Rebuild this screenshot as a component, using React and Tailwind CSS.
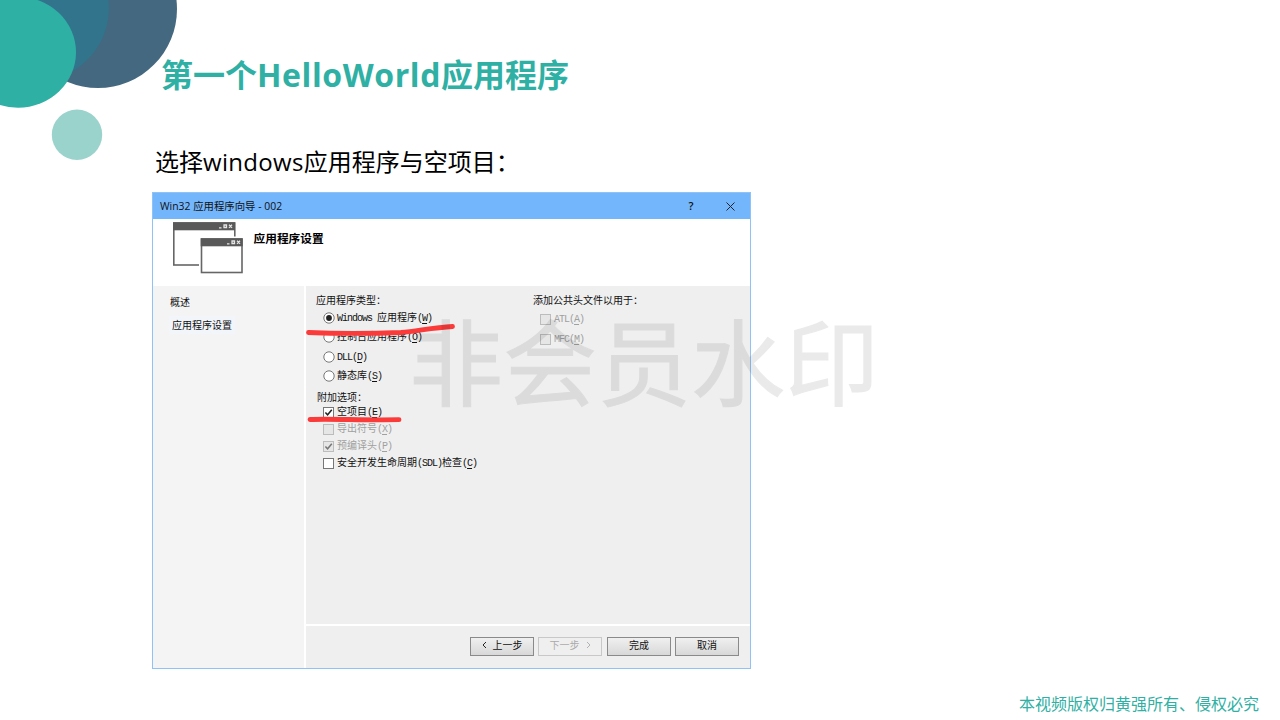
import React from 'react';

const Mono = ({ children }) => (
  <span className="font-['Liberation_Mono','Noto_Sans_CJK_SC',monospace] tracking-[-1px]">{children}</span>
);

const Key = ({ k }) => (
  <Mono>
    (<span className="underline underline-offset-2">{k}</span>)
  </Mono>
);

const Radio = ({ checked }) => (
  <svg className="size-[12px] shrink-0" viewBox="0 0 12 12">
    <circle cx="6" cy="6" r="5.2" fill="#fff" stroke="#777" strokeWidth="1" />
    {checked && <circle cx="6" cy="6" r="2.9" fill="#222" />}
  </svg>
);

const Check = ({ checked, disabled }) => (
  <svg className="size-[11px] shrink-0" viewBox="0 0 11 11">
    <rect x="0.5" y="0.5" width="10" height="10" fill={disabled ? '#e6e6e6' : '#fff'} stroke={disabled ? '#bcbcbc' : '#777'} />
    {checked && <path d="M2.4 5.4 4.6 7.8 8.8 2.8" fill="none" stroke={disabled ? '#777' : '#222'} strokeWidth="1.5" />}
  </svg>
);

const Option = ({ className, control, disabled, children }) => (
  <div className={`flex items-center whitespace-nowrap ${disabled ? 'text-[#a0a0a0]' : 'text-[#111]'} ${className}`}>
    <span className="flex w-[14px] shrink-0">{control}</span>
    <span>{children}</span>
  </div>
);

const Button = ({ className, disabled, children }) => (
  <button
    className={`flex h-[19px] w-[64px] items-center justify-center border pb-[3px] leading-none ${
      disabled
        ? 'border-[#c8c8c8] bg-[#efefef] text-[#aaa]'
        : 'border-[#8a8a8a] bg-linear-to-b from-[#f0f0f0] to-[#d8d8d8] text-[#111]'
    } ${className || ''}`}
  >
    {children}
  </button>
);

const Chevron = ({ right }) => (
  <svg className="h-[8px] w-[5px]" viewBox="0 0 5 8">
    <path d={right ? 'M1 1 4 4 1 7' : 'M4 1 1 4 4 7'} fill="none" stroke="currentColor" strokeWidth="0.9" />
  </svg>
);

const WindowsIcon = () => (
  <svg className="h-[52px] w-[71px]" viewBox="0 0 71 52">
    <rect x="0.8" y="1" width="61" height="42" fill="#fff" stroke="#666" strokeWidth="1.6" />
    <rect x="0" y="0.3" width="62" height="8" fill="#595959" />
    <path d="M46 5.8h2.500M51 3h2.500v2.500h-2.500zM56 2.800l3 3m0-3-3 3" fill="none" stroke="#e5e5e5" strokeWidth="1.3" />
    <rect x="26" y="14.500" width="45" height="38" fill="#fff" />
    <rect x="28.500" y="17" width="40.500" height="33.500" fill="#fff" stroke="#666" strokeWidth="1.6" />
    <rect x="27.700" y="16.300" width="42" height="8" fill="#595959" />
    <path d="M54 21.800h2.500M59 19h2.500v2.500h-2.500zM64 18.800l3 3m0-3-3 3" fill="none" stroke="#e5e5e5" strokeWidth="1.3" />
  </svg>
);

const Circles = () => (
  <svg className="absolute top-0 left-0 h-[180px] w-[200px]" viewBox="0 0 200 180">
    <clipPath id="overlap">
      <circle cx="98" cy="9" r="79" />
    </clipPath>
    <circle cx="98" cy="9" r="79" fill="#44687f" />
    <circle cx="36" cy="8" r="73" fill="#31748c" clipPath="url(#overlap)" />
    <ellipse cx="18" cy="52.3" rx="58" ry="55.5" fill="#2fb0a4" />
    <circle cx="77" cy="134.7" r="25.2" fill="#9ad3cc" />
  </svg>
);

const Dialog = () => (
  <section className="relative ml-[152px] flex h-[477px] w-[599px] flex-col border border-[#8fc3f5] bg-[#efefef] text-[10px] leading-[12px] text-[#111]">
    <header className="flex h-[26px] shrink-0 items-center bg-[#74b6fc] pl-[7px]">
      <span className="flex-1 font-['Open_Sans','Noto_Sans_CJK_SC',sans-serif] text-[10.4px]">Win32 应用程序向导 - 002</span>
      <span className="w-[9px] text-center font-['Open_Sans',sans-serif] text-[11px] font-semibold">?</span>
      <svg className="mr-[15.5px] ml-[30px] size-[9px]" viewBox="0 0 9 9">
        <path d="M.5.5l8 8m0-8-8 8" stroke="#223" strokeWidth="1" />
      </svg>
    </header>
    <div className="flex h-[67px] shrink-0 bg-white pt-[3px] pl-[20px]">
      <WindowsIcon />
      <h2 className="ml-[9.5px] pt-[7px] text-[11.7px] leading-[18px] font-bold text-black">应用程序设置</h2>
    </div>
    <div className="flex min-h-0 flex-1">
      <nav className="w-[151px] shrink-0 bg-[#f4f4f4] pt-[10px] pl-[17px]">
        <div>概述</div>
        <div className="mt-[8px] -ml-[1px] w-[66px] bg-[#f2f6fb] py-[3px] pl-[3px]">应用程序设置</div>
      </nav>
      <div className="flex flex-1 flex-col border-l-2 border-white">
        <div className="flex flex-1 pt-[8px]">
          <div className="w-[217px] pl-[10px]">
            <div>应用程序类型：</div>
            <div className="flex flex-col pl-[7px]">
              <Option className="mt-[2.5px] h-[19.3px]" control={<Radio checked />}><Mono>Windows </Mono>应用程序<Key k="W" /></Option>
              <Option className="h-[19.3px]" control={<Radio />}>控制台应用程序<Key k="O" /></Option>
              <Option className="h-[19.3px]" control={<Radio />}><Mono>DLL</Mono><Key k="D" /></Option>
              <Option className="h-[19.3px]" control={<Radio />}>静态库<Key k="S" /></Option>
            </div>
            <div className="mt-[5px] pl-px">附加选项：</div>
            <div className="flex flex-col pl-[7px]">
              <Option className="mt-[1px] h-[17px]" control={<Check checked />}>空项目<Key k="E" /></Option>
              <Option className="h-[17px]" disabled control={<Check disabled />}>导出符号<Key k="X" /></Option>
              <Option className="h-[17px]" disabled control={<Check disabled checked />}>预编译头<Key k="P" /></Option>
              <Option className="h-[17px]" control={<Check />}>安全开发生命周期<Mono>(SDL)</Mono>检查<Key k="C" /></Option>
            </div>
          </div>
          <div className="pl-[10px]">
            <div>添加公共头文件以用于：</div>
            <div className="pl-[7px]">
              <Option className="mt-[3px] h-[20px]" disabled control={<Check disabled />}><Mono>ATL</Mono><Key k="A" /></Option>
              <Option className="h-[20px]" disabled control={<Check disabled />}><Mono>MFC</Mono><Key k="M" /></Option>
            </div>
          </div>
        </div>
        <footer className="flex h-[44px] justify-end border-t-2 border-white pt-[11px] pr-[11px]">
          <Button className="gap-[6px]"><Chevron />上一步</Button>
          <Button disabled className="ml-[4px] gap-[6px]">下一步<Chevron right /></Button>
          <Button className="ml-[5px]">完成</Button>
          <Button className="ml-[4px]">取消</Button>
        </footer>
      </div>
    </div>
    <svg className="absolute top-[127px] left-[150px] h-[110px] w-[160px]" viewBox="0 0 160 110">
      <path d="M5.500 12.500C30 13.500 70 13.500 98 12.500C115 11 130 7.500 149.500 6.500" fill="none" stroke="#fb3a3a" strokeWidth="4.800" strokeLinecap="round" />
      <path d="M7 99.500C30 98.500 60 100.500 96 99.700" fill="none" stroke="#fb3a3a" strokeWidth="4.800" strokeLinecap="round" />
    </svg>
  </section>
);

export default function App() {
  return (
    <main className="relative h-[720px] w-[1280px] overflow-hidden bg-white font-['Noto_Sans_CJK_SC',sans-serif]">
      <Circles />
      <div className="relative flex h-full flex-col">
        <h1 className="mt-[51px] ml-[161px] h-[48px] font-['Open_Sans','Noto_Sans_CJK_SC',sans-serif] text-[32px] leading-[48px] font-bold whitespace-nowrap text-[#2fb0a4]">
          第一个<span className="tracking-[0.6px]">HelloWorld</span>应用程序
        </h1>
        <p className="mt-[45px] ml-[155px] h-[48px] font-['Open_Sans','Noto_Sans_CJK_SC',sans-serif] text-[24px] leading-[36px] whitespace-nowrap text-black">
          选择<span className="tracking-[0.3px]">windows</span>应用程序与空项目：
        </p>
        <Dialog />
        <footer className="mt-[22px] mr-[21px] text-right text-[16px] leading-[24px] text-[#2fb0a4]">本视频版权归黄强所有、侵权必究</footer>
      </div>
      <div className="pointer-events-none absolute top-[288px] left-[409px] text-[94px] leading-[140px] whitespace-nowrap text-black opacity-8 [-webkit-text-stroke:1px_black]">非会员水印</div>
    </main>
  );
}
